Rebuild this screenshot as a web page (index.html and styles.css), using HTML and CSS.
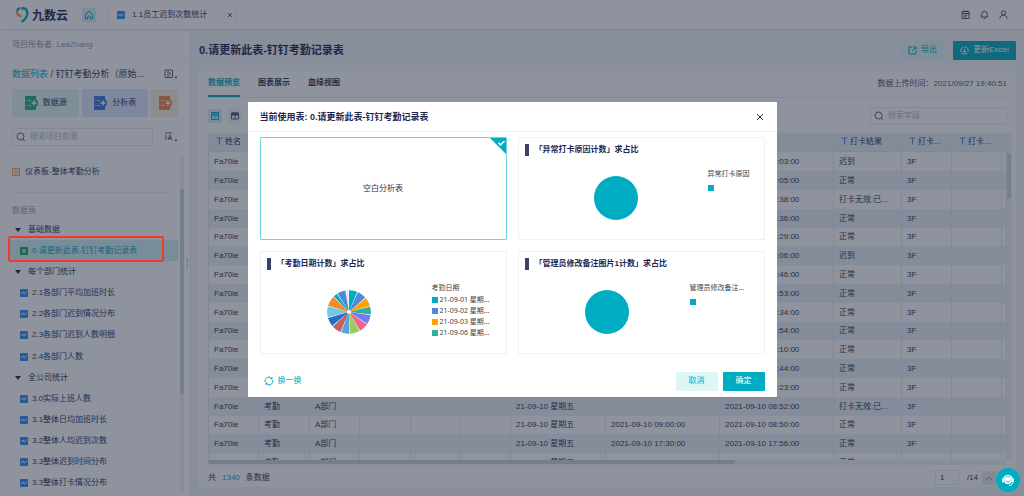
FILE: index.html
```html
<!DOCTYPE html>
<html lang="zh-CN">
<head>
<meta charset="utf-8">
<title>九数云</title>
<link rel="stylesheet" href="styles.css">
</head>
<body>
<svg class="defs" aria-hidden="true">
  <symbol id="i-sheet" viewBox="0 0 8 8"><rect width="8" height="8" rx="1" fill="#2b8cf0"/><path d="M1.2 5 2.8 3 4.4 4.900 6.800 2.800" fill="none" stroke="#fff" stroke-width="1"/></symbol>
  <symbol id="i-search" viewBox="0 0 10 10"><circle cx="4.500" cy="4.500" r="3.500"/><path d="M7 7 9 9"/></symbol>
  <symbol id="i-t" viewBox="0 0 7 8"><path d="M.5 1h6M3.500 1v6.500" fill="none" stroke="#5a82e6" stroke-width="1.100"/></symbol>
  <symbol id="i-add" viewBox="0 0 14 14"><g stroke="none" fill="currentColor"><path d="M1 0h11v4H1zM1 5h11v4H1zM1 10h11v4H1z"/><path d="M1 4h4v1H1zM1 9h4v1H1z" opacity=".6"/><circle cx="10" cy="7" r="4"/></g><path d="M7.500 7h5M10 4.500v5" stroke="#fff" stroke-width="1.400"/></symbol>
</svg>

<header class="topbar">
  <svg class="mark" viewBox="0 0 13 16"><path d="M1 4.500A4 4 0 0 1 4 1" fill="none" stroke="#2b8cf0" stroke-width="2.200"/><path d="M1.200 4.500C.8 7.500 3 9.200 5.500 8.800" fill="none" stroke="#f7952b" stroke-width="2.200"/><path d="M5 1.600C9 .5 11.600 2.800 11.300 6.500 11 10 8.500 13 5.500 15" fill="none" stroke="#00acc1" stroke-width="2.400"/></svg>
  <span class="brand">九数云</span>
  <a class="home" href="#" aria-label="首页"><svg viewBox="0 0 10 10"><path d="M1.500 4.300 5 1.200l3.500 3.100v4.500H6.200V7a1.200 1.200 0 0 0-2.400 0v1.800H1.500z"/></svg></a>
  <div class="doc-tab">
    <svg class="sheet"><use href="#i-sheet"/></svg>
    <span>1.1员工迟到次数统计</span>
    <button class="plain tab-x" aria-label="关闭标签"><svg viewBox="0 0 6 6"><path d="M1 1l4 4M5 1 1 5"/></svg></button>
  </div>
  <nav class="user-nav">
    <button class="plain" aria-label="日历"><svg viewBox="0 0 9 9"><path d="M1 1.500h7v7H1zM1 3.500h7M3 .3v2M6 .3v2M2.800 5.200h3.500M2.800 6.800h2.500"/></svg></button>
    <button class="plain" aria-label="通知"><svg viewBox="0 0 9 9"><path d="M.8 7h7.400M1.800 7V4a2.700 2.700 0 0 1 5.400 0v3M3.700 8.500h1.600"/></svg></button>
    <button class="plain" aria-label="账户"><svg viewBox="0 0 9 9"><circle cx="4.500" cy="2.800" r="2.100"/><path d="M.8 8.600C1.200 6 2.500 5 4.500 5s3.300 1 3.700 3.600"/></svg></button>
  </nav>
</header>

<div class="workspace">
  <aside class="sidebar">
    <p class="owner">项目所有者: LeaZhang</p>
    <div class="crumb"><span><a href="#">数据列表</a> / 钉钉考勤分析（原始...</span>
      <button class="plain" aria-label="布局"><svg viewBox="0 0 14 10"><path d="M1 1h7.500v7.500H1zM4 1v7.500M6 3v3.500"/><path d="M11 8h2l-1 1.200z" fill="currentColor"/></svg></button>
    </div>
    <div class="adders">
      <button class="add green"><svg><use href="#i-add"/></svg>数据源</button>
      <button class="add blue"><svg><use href="#i-add"/></svg>分析表</button>
      <button class="add orange" aria-label="仪表板"><svg><use href="#i-add"/></svg></button>
    </div>
    <div class="find">
      <label class="search"><svg><use href="#i-search"/></svg><input type="text" placeholder="搜索项目和表" aria-label="搜索项目和表"></label>
      <button class="plain" aria-label="排序"><svg viewBox="0 0 14 10"><path d="M1 1h7M2 3v5M4 8l2-5 2 5M4.700 6.500h2.600"/><path d="M11 8h2l-1 1.200z" fill="currentColor"/></svg></button>
    </div>
    <div class="boards"><svg class="sheet" viewBox="0 0 8 8"><rect x=".5" y=".5" width="7" height="7" fill="#fff" stroke="#f2a541"/><path d="M4 1v6M2 3h1M2 5h1M5 3h1.500M5 5h1.500" stroke="#f2a541"/></svg>仪表板-整体考勤分析</div>
    <p class="group-label">数据表</p>
    <ul class="tree">
      <li class="folder">基础数据</li>
      <li class="leaf active"><svg class="sheet" viewBox="0 0 8 8"><rect width="8" height="8" rx="1" fill="#22a565"/><path d="M2.500 2l3 4M5.500 2l-3 4" stroke="#fff"/></svg>0.请更新此表-钉钉考勤记录表</li>
      <li class="folder">每个部门统计</li>
      <li class="leaf"><svg class="sheet"><use href="#i-sheet"/></svg>2.1各部门平均加班时长</li>
      <li class="leaf"><svg class="sheet"><use href="#i-sheet"/></svg>2.2各部门迟到情况分布</li>
      <li class="leaf"><svg class="sheet"><use href="#i-sheet"/></svg>2.3各部门迟到人数明细</li>
      <li class="leaf"><svg class="sheet"><use href="#i-sheet"/></svg>2.4各部门人数</li>
      <li class="folder">全公司统计</li>
      <li class="leaf"><svg class="sheet"><use href="#i-sheet"/></svg>3.0实际上班人数</li>
      <li class="leaf"><svg class="sheet"><use href="#i-sheet"/></svg>3.1整体日均加班时长</li>
      <li class="leaf"><svg class="sheet"><use href="#i-sheet"/></svg>3.2整体人均迟到次数</li>
      <li class="leaf"><svg class="sheet"><use href="#i-sheet"/></svg>3.3整体迟到时间分布</li>
      <li class="leaf"><svg class="sheet"><use href="#i-sheet"/></svg>3.3整体打卡情况分布</li>
    </ul>
    <div class="side-scroll"></div>
    <div class="grip"></div>
  </aside>

  <main class="main">
    <div class="title-row">
      <h1>0.请更新此表-钉钉考勤记录表</h1>
      <button class="btn soft"><svg viewBox="0 0 9 9"><path d="M4.500 1H1v7h7V4.500M5.500 1H8v2.500M8 1 4 5"/></svg>导出</button>
      <button class="btn solid"><svg viewBox="0 0 9 9"><path d="M1.300 6.500A3.700 3.700 0 0 1 4 .9M5 .8a3.700 3.700 0 0 1 2.700 5.500M7 7.300a3.700 3.700 0 0 1-5 0"/><path d="M4.500 2.700v3.600M3 4.900l1.500 1.500L6 4.900"/></svg>更新Excel</button>
    </div>
    <section class="panel">
      <div class="tabs">
        <button class="plain on">数据预览</button><button class="plain">图表展示</button><button class="plain">血缘视图</button>
        <span class="stamp">数据上传时间：2021/09/27 19:40:51</span>
      </div>
      <div class="tools">
        <button class="plain view on" aria-label="表格视图"><svg viewBox="0 0 8 8"><path d="M.5.500h7v7h-7zM.5 3h7M2.500 5h3"/><path d="M.5.500h7V3h-7z" fill="currentColor" opacity=".5"/></svg></button>
        <button class="plain view" aria-label="列视图"><svg viewBox="0 0 8 8"><path d="M.5 1h7v6h-7zM.5 3h7M4 3v4"/><path d="M.5 1h7v1.500h-7z" fill="currentColor"/></svg></button>
        <label class="search"><svg><use href="#i-search"/></svg><input type="text" placeholder="搜索字段" aria-label="搜索字段"></label>
      </div>
      <div class="grid-area">
        <div class="grid-clip">
        <table class="grid">
          <colgroup><col class="c50"><col class="c51"><col class="c50"><col class="c51"><col class="c50"><col class="c50"><col class="c95"><col class="c114"><col class="c114"><col class="c68"><col class="c50"><col class="c50"><col></colgroup>
          <thead><tr><th><svg><use href="#i-t"/></svg>姓名</th><th></th><th></th><th></th><th></th><th></th><th></th><th></th><th></th><th><svg><use href="#i-t"/></svg>打卡结果</th><th><svg><use href="#i-t"/></svg>打卡...</th><th><svg><use href="#i-t"/></svg>打卡...</th><th></th></tr></thead>
          <tbody>
          <tr><td>Fa70ie</td><td></td><td></td><td></td><td></td><td></td><td></td><td></td><td>2021-09-10 09:03:00</td><td>迟到</td><td>3F</td><td></td><td></td></tr>
          <tr><td>Fa70ie</td><td></td><td></td><td></td><td></td><td></td><td></td><td></td><td>2021-09-10 18:05:00</td><td>正常</td><td>3F</td><td></td><td></td></tr>
          <tr><td>Fa70ie</td><td></td><td></td><td></td><td></td><td></td><td></td><td></td><td>2021-09-10 08:38:00</td><td>打卡无效:已...</td><td>3F</td><td></td><td></td></tr>
          <tr><td>Fa70ie</td><td></td><td></td><td></td><td></td><td></td><td></td><td></td><td>2021-09-10 08:36:00</td><td>正常</td><td>3F</td><td></td><td></td></tr>
          <tr><td>Fa70ie</td><td></td><td></td><td></td><td></td><td></td><td></td><td></td><td>2021-09-10 18:29:00</td><td>正常</td><td>3F</td><td></td><td></td></tr>
          <tr><td>Fa70ie</td><td></td><td></td><td></td><td></td><td></td><td></td><td></td><td>2021-09-10 09:06:00</td><td>迟到</td><td>3F</td><td></td><td></td></tr>
          <tr><td>Fa70ie</td><td></td><td></td><td></td><td></td><td></td><td></td><td></td><td>2021-09-10 17:46:00</td><td>正常</td><td>3F</td><td></td><td></td></tr>
          <tr><td>Fa70ie</td><td></td><td></td><td></td><td></td><td></td><td></td><td></td><td>2021-09-10 08:53:00</td><td>正常</td><td>3F</td><td></td><td></td></tr>
          <tr><td>Fa70ie</td><td></td><td></td><td></td><td></td><td></td><td></td><td></td><td>2021-09-10 17:34:00</td><td>正常</td><td>3F</td><td></td><td></td></tr>
          <tr><td>Fa70ie</td><td></td><td></td><td></td><td></td><td></td><td></td><td></td><td>2021-09-10 08:54:00</td><td>正常</td><td>3F</td><td></td><td></td></tr>
          <tr><td>Fa70ie</td><td></td><td></td><td></td><td></td><td></td><td></td><td></td><td>2021-09-10 18:10:00</td><td>正常</td><td>3F</td><td></td><td></td></tr>
          <tr><td>Fa70ie</td><td></td><td></td><td></td><td></td><td></td><td></td><td></td><td>2021-09-10 08:44:00</td><td>正常</td><td>3F</td><td></td><td></td></tr>
          <tr><td>Fa70ie</td><td></td><td></td><td></td><td></td><td></td><td></td><td></td><td>2021-09-10 18:23:00</td><td>正常</td><td>3F</td><td></td><td></td></tr>
          <tr><td>Fa70ie</td><td>考勤</td><td>A部门</td><td></td><td></td><td></td><td>21-09-10 星期五</td><td></td><td>2021-09-10 08:52:00</td><td>打卡无效:已...</td><td>3F</td><td></td><td></td></tr>
          <tr><td>Fa70ie</td><td>考勤</td><td>A部门</td><td></td><td></td><td></td><td>21-09-10 星期五</td><td>2021-09-10 09:00:00</td><td>2021-09-10 08:50:00</td><td>正常</td><td>3F</td><td></td><td></td></tr>
          <tr><td>Fa70ie</td><td>考勤</td><td>A部门</td><td></td><td></td><td></td><td>21-09-10 星期五</td><td>2021-09-10 17:30:00</td><td>2021-09-10 17:56:00</td><td>正常</td><td>3F</td><td></td><td></td></tr>
          <tr><td>Fa70ie</td><td>考勤</td><td>A部门</td><td></td><td></td><td></td><td>21-09-10 星期五</td><td>2021-09-10 09:00:00</td><td>2021-09-10 08:57:00</td><td>正常</td><td>3F</td><td></td><td></td></tr>
          </tbody>
        </table>
        </div>
        <div class="v-track"><div class="v-thumb"></div></div>
        <div class="h-track"><div class="h-thumb"></div></div>
      </div>
      <footer class="pager">
        <span>共</span><b>1340</b><span>条数据</span>
        <input class="page-no" type="text" value="1" aria-label="页码">
        <span class="pages">/14</span>
        <button class="plain up" aria-label="上一页"><svg viewBox="0 0 8 6"><path d="M1 5l3-3 3 3"/></svg></button>
      </footer>
    </section>
  </main>
</div>

<div class="mask">
  <div class="dialog" role="dialog" aria-labelledby="dlg-title">
    <div class="dlg-head"><h2 id="dlg-title">当前使用表: 0.请更新此表-钉钉考勤记录表</h2>
      <button class="plain" aria-label="关闭"><svg viewBox="0 0 8 8"><path d="M1 1l6 6M7 1 1 7"/></svg></button></div>
    <div class="cards">
      <div class="card picked">空白分析表<svg class="tick" viewBox="0 0 16 16"><path d="M0 0h16v16z" fill="#00acc1"/><path d="M8.500 4.800l2 2L14.500 3" fill="none" stroke="#fff" stroke-width="1.600"/></svg></div>
      <div class="card">
        <h3>「异常打卡原因计数」求占比</h3>
        <div class="chart right-wide"><div class="dot"></div><div class="legend"><p>异常打卡原因</p><p class="key solo"></p></div></div>
      </div>
      <div class="card">
        <h3>「考勤日期计数」求占比</h3>
        <div class="chart">
          <svg class="pie" viewBox="0 0 44 44"><g fill="none" stroke-width="20" transform="rotate(-90 22 22)">
            <circle cx="22" cy="22" r="12" pathLength="360" stroke="#00acc1" stroke-dasharray="22 338" stroke-dashoffset="0"/>
            <circle cx="22" cy="22" r="12" pathLength="360" stroke="#5088dc" stroke-dasharray="24 336" stroke-dashoffset="-24"/>
            <circle cx="22" cy="22" r="12" pathLength="360" stroke="#ffa200" stroke-dasharray="23 337" stroke-dashoffset="-50"/>
            <circle cx="22" cy="22" r="12" pathLength="360" stroke="#2db39b" stroke-dasharray="22 338" stroke-dashoffset="-75"/>
            <circle cx="22" cy="22" r="12" pathLength="360" stroke="#6f7cf0" stroke-dasharray="24 336" stroke-dashoffset="-99"/>
            <circle cx="22" cy="22" r="12" pathLength="360" stroke="#f0648c" stroke-dasharray="24 336" stroke-dashoffset="-125"/>
            <circle cx="22" cy="22" r="12" pathLength="360" stroke="#98cc62" stroke-dasharray="26 334" stroke-dashoffset="-151"/>
            <circle cx="22" cy="22" r="12" pathLength="360" stroke="#55a3d4" stroke-dasharray="22 338" stroke-dashoffset="-179"/>
            <circle cx="22" cy="22" r="12" pathLength="360" stroke="#c0615f" stroke-dasharray="25 335" stroke-dashoffset="-203"/>
            <circle cx="22" cy="22" r="12" pathLength="360" stroke="#276fc4" stroke-dasharray="24 336" stroke-dashoffset="-230"/>
            <circle cx="22" cy="22" r="12" pathLength="360" stroke="#6fc8e4" stroke-dasharray="29 331" stroke-dashoffset="-256"/>
            <circle cx="22" cy="22" r="12" pathLength="360" stroke="#f28c2c" stroke-dasharray="27 333" stroke-dashoffset="-287"/>
            <circle cx="22" cy="22" r="12" pathLength="360" stroke="#00acc1" stroke-dasharray="10 350" stroke-dashoffset="-316"/>
            <circle cx="22" cy="22" r="12" pathLength="360" stroke="#5088dc" stroke-dasharray="22 338" stroke-dashoffset="-328"/>
            <circle cx="22" cy="22" r="12" pathLength="360" stroke="#e4e0ee" stroke-dasharray="5 355" stroke-dashoffset="-352"/>
          </g></svg>
          <div class="legend"><p>考勤日期</p><p class="key">21-09-01 星期...</p><p class="key k2">21-09-02 星期...</p><p class="key k3">21-09-03 星期...</p><p class="key k4">21-09-06 星期...</p></div>
        </div>
      </div>
      <div class="card">
        <h3>「管理员修改备注图片1计数」求占比</h3>
        <div class="chart"><div class="dot"></div><div class="legend"><p>管理员修改备注...</p><p class="key solo"></p></div></div>
      </div>
    </div>
    <div class="dlg-foot">
      <button class="plain swap"><svg viewBox="0 0 10 10"><path d="M1.200 6A3.900 3.900 0 0 1 7.500 2M8.800 4a3.900 3.900 0 0 1-6.300 4"/><path d="M8.500.8v2.400H6zM1.500 9.200V6.800H4z" fill="currentColor" stroke="none"/></svg>换一换</button>
      <button class="btn soft">取消</button><button class="btn solid">确定</button>
    </div>
  </div>
</div>

<div class="callout"></div>
<button class="chat" aria-label="客服"><svg viewBox="0 0 14 14"><path d="M2.500 7a4.500 4.500 0 0 1 9 0" fill="none" stroke="#fff" stroke-width="1.300"/><rect x="1" y="5.500" width="2.400" height="4" rx="1" fill="#fff"/><rect x="10.600" y="5.500" width="2.400" height="4" rx="1" fill="#fff"/><path d="M3.500 5.500C4 3.500 10 3.500 10.500 5.500v2.700C10.500 12 3.500 12 3.500 8.200z" fill="#fff"/><path d="M5 7.500c.5 2.200 3.500 2.200 4 0" fill="none" stroke="#00acc1"/><path d="M11.500 9.500c0 2-1.500 3-3.500 3" fill="none" stroke="#fff"/></svg></button>
</body>
</html>
```

FILE: styles.css
```css
* { box-sizing: border-box; margin: 0; padding: 0; }
body {
  height: 100vh; overflow: hidden; display: flex; flex-direction: column;
  font: 8px/12px "Liberation Sans", "Noto Sans CJK SC", sans-serif;
  color: #2a3357; background: #f0f4f7;
}
button, input { font: inherit; color: inherit; border: 0; background: none; outline: 0; }
svg { flex: none; fill: none; stroke: currentColor; stroke-width: 1; }
#i-sheet rect { stroke: none; }
a { color: #00acc1; text-decoration: none; }
ul { list-style: none; }
.defs { position: absolute; width: 0; height: 0; }
.plain { display: flex; align-items: center; }
.sheet { width: 8px; height: 8px; stroke: none; }

.topbar { flex: none; height: 29px; display: flex; align-items: center; padding: 0 16px; background: #fff; box-shadow: 0 1px 2px #d5dbe3; z-index: 1; }
.mark { width: 13px; height: 16px; }
.brand { margin-left: 3px; font: bold 12px/16px "Noto Sans CJK SC", sans-serif; color: #1c2550; }
.home { margin-left: 14px; width: 14px; height: 14px; background: #d4f1f4; display: grid; place-items: center; }
.home svg { width: 10px; height: 10px; }
.doc-tab { margin-left: 11px; padding: 0 3px 0 9px; height: 12px; display: flex; align-items: center; gap: 7px; border: solid #e6eaf0; border-width: 0 1px; }
.tab-x { margin-left: 13px; color: #5d6480; }
.tab-x svg { width: 6px; height: 6px; }
.user-nav { margin-left: auto; display: flex; gap: 10px; color: #4c5473; }
.user-nav svg { width: 9px; height: 9px; }

.workspace { flex: 1; min-height: 0; display: flex; }
.sidebar { position: relative; flex: none; width: 191px; padding: 0 12px 2px; display: flex; flex-direction: column; background: #fff; border-right: 1px solid #e6ebf0; }
.owner { margin: 0 -12px; padding: 10px 12px 9px; color: #8d93a6; border-bottom: 1px solid #f0f2f5; }
.crumb { height: 30px; margin-top: -2px; display: flex; align-items: center; justify-content: space-between; font-size: 9px; white-space: nowrap; }
.crumb svg, .find button svg { width: 14px; height: 10px; color: #5d6480; }
.adders { display: flex; gap: 3px; height: 28px; }
.add { width: 67px; display: flex; align-items: center; justify-content: center; gap: 5px; border-radius: 1px; }
.add svg { width: 14px; height: 14px; }
.green { background: #dff4f0; } .green svg { color: #1cae84; }
.blue { background: #dce7fd; } .blue svg { color: #3a78dc; }
.orange { width: 27px; background: #fdeedd; } .orange svg { color: #f0874a; }
.find { margin: 11px 0 16px; display: flex; justify-content: space-between; align-items: center; }
.search { width: 141px; height: 18px; padding: 0 3px; display: flex; align-items: center; gap: 4px; border: 1px solid #e6eaf0; }
.search svg { width: 10px; height: 10px; color: #5d6480; }
.search input { width: 100%; min-width: 0; }
.search input::placeholder { color: #b4b9c8; opacity: 1; }
.boards { height: 20px; display: flex; align-items: center; gap: 5px; }
.group-label { margin: 10px 6px 0 0; padding: 12px 0 2px; border-top: 1px solid #e8ecf1; color: #9a9fb0; }
.tree { flex: 1; display: flex; flex-direction: column; margin: 0 0 0 -4px; }
.tree li { flex: 1; display: flex; align-items: center; gap: 4px; padding-left: 12px; }
.folder::before { content: ""; width: 0; margin: 0 3px 0 -5px; border: 3px solid transparent; border-top: 4px solid #1c2550; border-bottom: 0; }
.active { background: #d2f2f3; color: #00acc1; }
.side-scroll { position: absolute; right: 6px; top: 126px; bottom: 5px; width: 4px; background: linear-gradient(#cdd2db, #cdd2db) 0 34px / 4px 205px no-repeat #f0f2f5; }
.grip { position: absolute; right: 2px; top: 230px; height: 8px; border-left: 1px dotted #9ba2b3; }
.callout { position: absolute; z-index: 5; left: 8px; width: 156px; top: 236px; height: 26px; border: 2px solid #f4372d; border-radius: 2px; }

.main { flex: 1; min-width: 0; display: flex; flex-direction: column; padding: 0 8px 9px; }
.title-row { height: 42px; display: flex; align-items: center; gap: 9px; }
h1 { margin-right: auto; font-size: 11px; line-height: 16px; color: #1c2550; }
.btn { height: 19px; min-width: 42px; padding: 0 7px; display: flex; align-items: center; justify-content: center; gap: 4px; border-radius: 1px; }
.btn svg { width: 9px; height: 9px; }
.soft { background: #dff6f8; color: #00acc1; }
.solid { background: #00acc1; color: #fff; }
.main .solid { width: 63px; white-space: nowrap; }
.panel { flex: 1; min-height: 0; display: flex; flex-direction: column; padding: 0 4px 0 9px; background: #fff; }
.tabs { height: 27px; margin-right: 5px; display: flex; gap: 18px; border-bottom: 1px solid #e8ecf1; }
.tabs button { height: 26px; border-bottom: 2px solid transparent; font-weight: bold; }
.tabs .on { color: #00acc1; border-color: #00acc1; }
.stamp { margin-left: auto; align-self: center; color: #4c5473; }
.tools { height: 35px; margin-right: 5px; display: flex; align-items: center; gap: 6px; }
.view { width: 14px; height: 14px; justify-content: center; background: #f1f3f7; color: #4c5473; }
.view svg { width: 8px; height: 8px; }
.view.on { color: #00acc1; background: #d4f1f4; }
.tools .search { width: 137px; margin-left: auto; }

.grid-area { flex: 1; min-height: 0; display: grid; grid-template: minmax(0, 1fr) 5px / minmax(0, 1fr) 5px; }
.grid-clip { overflow: hidden; }
.grid { width: 100%; table-layout: fixed; border-collapse: separate; border-spacing: 0; border-left: 1px solid #e4e9ef; }
.c50 { width: 50px; } .c51 { width: 51px; } .c68 { width: 68px; } .c95 { width: 95px; } .c114 { width: 114px; }
.grid th, .grid td { height: 19px; padding: 0 0 0 5px; border-right: 1px solid #e4e9ef; text-align: left; font-weight: normal; white-space: nowrap; overflow: hidden; }
.grid tbody tr:nth-child(5n) td { height: 18px; }
.grid tr:nth-child(even) td { background: #edf3f7; }
.grid th { background: #e9eef5; border-bottom: 1px solid #dfe4eb; padding-left: 7px; }
.grid th svg { width: 7px; height: 8px; margin-right: 2px; vertical-align: -1px; }
.v-track { padding-top: 20px; background: #f4f5f8; }
.v-thumb { width: 4px; height: 46px; border-radius: 2px; background: #d3d7df; }
.h-track { background: #f0f2f5; border-radius: 2px; }
.h-thumb { width: 66%; height: 4px; border-radius: 2px; background: #cfd3dc; }
.pager { height: 19px; padding: 0 16px 0 0; margin-top: 3px; display: flex; align-items: center; }
.pager b { margin: 0 6px; font-weight: normal; color: #00acc1; }
.page-no { width: 24px; height: 15px; margin-left: auto; padding: 0 4px; border: 1px solid #e6eaf0; }
.pages { margin: 0 4px 0 8px; }
.up { width: 14px; height: 14px; justify-content: center; background: #e5e8ee; color: #8d93a6; }
.up svg { width: 8px; height: 6px; }

.mask { position: fixed; inset: 0; z-index: 3; padding-top: 3px; display: flex; align-items: center; justify-content: center; background: rgba(31, 40, 62, .5); }
.dialog { width: 529px; max-width: 96vw; background: #fff; border-radius: 1px; }
.dlg-head { height: 30px; padding: 0 13px 0 12px; display: flex; align-items: center; justify-content: space-between; border-bottom: 1px solid #eef0f3; color: #1c2550; }
.dlg-head svg { width: 8px; height: 8px; }
h2 { font-size: 9px; line-height: 14px; }
.cards { padding: 5px 12px 0; display: grid; grid-template-columns: 1fr 1fr; gap: 11px; }
.card { position: relative; height: 103px; padding: 6px; border: 1px solid #f0f1f3; }
.picked { display: grid; place-items: center; border-color: #6cd3df; border-radius: 1px; }
.tick { position: absolute; top: 0; right: 0; width: 16px; height: 16px; stroke: none; }
h3 { font-size: 8px; line-height: 12px; padding-left: 6px; border-left: 4px solid #3c4368; color: #1c2550; }
.chart { display: flex; align-items: flex-start; padding: 20px 0 0 60px; }
.dot, .pie { flex: none; width: 44px; height: 44px; border-radius: 50%; }
.dot { background: #00acc1; }
.pie { stroke: none; }
.legend { margin: -8px 0 0 61px; font: 7px/12px "Noto Sans", "Noto Sans CJK SC", sans-serif; color: #444; white-space: nowrap; }
.right-wide { padding-left: 69px; }
.right-wide .legend { margin-left: 70px; }
.legend .key { display: flex; align-items: center; gap: 2px; line-height: 11px; }
.key::before { content: ""; width: 6px; height: 6px; background: #00acc1; }
.k2::before { background: #5088dc; } .k3::before { background: #ffa200; } .k4::before { background: #2db39b; }
.legend .solo { margin-top: 2px; height: 12px; }
.dlg-foot { height: 43px; padding: 11px 12px 0 16px; display: flex; align-items: center; gap: 5px; }
.swap { margin-right: auto; gap: 4px; color: #00acc1; }
.swap svg { width: 10px; height: 10px; }

.chat { position: fixed; z-index: 4; right: 4px; bottom: 4px; width: 24px; height: 24px; border-radius: 50%; display: grid; place-items: center; background: #00acc1; }
.chat svg { width: 14px; height: 14px; stroke: none; }
```
